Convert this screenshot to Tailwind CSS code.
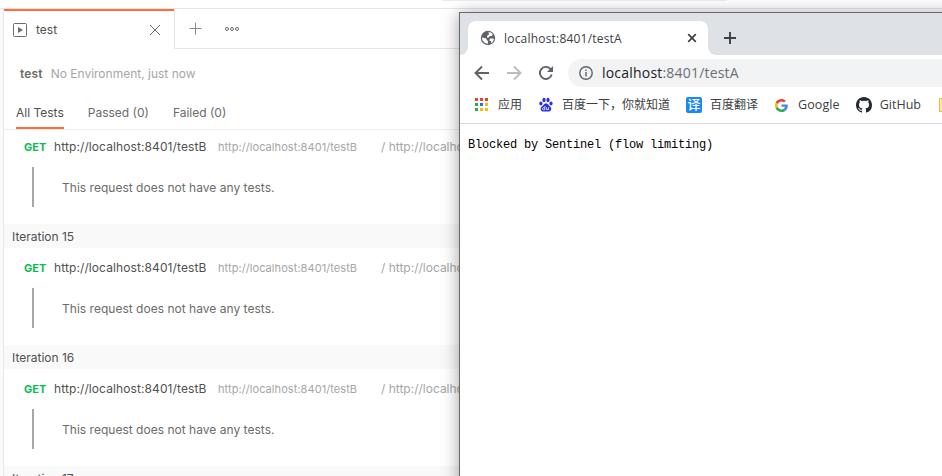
<!DOCTYPE html>
<html lang="zh">
<head>
<meta charset="utf-8">
<title>Runner</title>
<script src="https://cdn.jsdelivr.net/npm/@tailwindcss/browser@4"></script>
</head>
<body class="bg-white">
<div class="relative w-[942px] h-[476px] overflow-hidden bg-white font-['Inter',sans-serif] text-[12px] text-[#505050] whitespace-nowrap">
  <div class="h-[9px] border-b border-[#e6e6e6] pl-[442px]"><div class="h-px w-[285px] bg-[#ededed]"></div></div>
  <div class="flex h-[467px]">
    <div class="w-[4px] shrink-0 bg-[#fafafa] border-r border-[#e8e8e8]"></div>
    <main class="flex-1 flex flex-col min-w-0">
      <div class="flex h-[40px] shrink-0">
        <div class="flex items-center w-[170px] border-t-2 border-[#ff6c37] pl-[9px] pr-[13px]">
          <svg class="w-[14px] h-[14px]" viewBox="0 0 14 14"><rect x=".5" y=".5" width="13" height="13" rx="1" fill="none" stroke="#6b6b6b"/><path d="M5 4l5 3-5 3z" fill="#6b6b6b"/></svg>
          <span class="ml-[9px]">test</span>
          <svg class="ml-auto w-[12px] h-[12px]" viewBox="0 0 12 12"><path d="M1 1l10 10M11 1L1 11" stroke="#6b6b6b"/></svg>
        </div>
        <div class="flex-1 flex items-center border-l border-b border-[#e6e6e6] pl-[14px]">
          <svg class="w-[13px] h-[13px]" viewBox="0 0 13 13"><path d="M6.500 .5v12M.5 6.500h12" stroke="#8a8a8a"/></svg>
          <svg class="ml-[23px] w-[14px] h-[6px]" viewBox="0 0 14 6" fill="none" stroke="#6b6b6b"><circle cx="2" cy="3" r="1.500"/><circle cx="7" cy="3" r="1.500"/><circle cx="12" cy="3" r="1.500"/></svg>
        </div>
      </div>
      <div class="flex items-center h-[50px] shrink-0 pl-[16px] gap-[8px]"><b class="font-semibold text-[#6b6b6b] tracking-[0.15px]">test</b><span class="text-[#a6a6a6]">No Environment, just now</span></div>
      <div class="flex h-[31px] shrink-0 pl-[12px] gap-[24px] border-b border-[#ededed] text-[#6b6b6b] leading-[28px]">
        <span class="h-[30px] border-b-2 border-[#ff6c37] text-[#505050]">All Tests</span><span>Passed (0)</span><span>Failed (0)</span>
      </div>
      <section class="h-[94px] shrink-0">
        <div class="flex h-[34px] items-center pl-[20px]"><b class="w-[30px] text-[11px] font-bold text-[#0cbb52]">GET</b><span class="w-[164px] tracking-[0.1px]">http://localhost:8401/testB</span><span class="w-[163px] text-[11px] text-[#a6a6a6] tracking-[0.07px]">http://localhost:8401/testB</span><span class="text-[#a6a6a6]">/ http://localhost:8401/testB</span></div>
        <div class="mt-[3px] ml-[28px] h-[40px] border-l-2 border-[#a6a6a6] pl-[28px] leading-[42px] text-[#6b6b6b] tracking-[0.02px]">This request does not have any tests.</div>
      </section>
      <div class="h-[24px] shrink-0 bg-[#f9f9f9] pl-[8px] leading-[25px]">Iteration 15</div>
      <section class="h-[97px] shrink-0">
        <div class="flex h-[40px] items-center pl-[20px]"><b class="w-[30px] text-[11px] font-bold text-[#0cbb52]">GET</b><span class="w-[164px] tracking-[0.1px]">http://localhost:8401/testB</span><span class="w-[163px] text-[11px] text-[#a6a6a6] tracking-[0.07px]">http://localhost:8401/testB</span><span class="text-[#a6a6a6]">/ http://localhost:8401/testB</span></div>
        <div class="ml-[28px] h-[40px] border-l-2 border-[#a6a6a6] pl-[28px] leading-[42px] text-[#6b6b6b] tracking-[0.02px]">This request does not have any tests.</div>
      </section>
      <div class="h-[24px] shrink-0 bg-[#f9f9f9] pl-[8px] leading-[25px]">Iteration 16</div>
      <section class="h-[97px] shrink-0">
        <div class="flex h-[40px] items-center pl-[20px]"><b class="w-[30px] text-[11px] font-bold text-[#0cbb52]">GET</b><span class="w-[164px] tracking-[0.1px]">http://localhost:8401/testB</span><span class="w-[163px] text-[11px] text-[#a6a6a6] tracking-[0.07px]">http://localhost:8401/testB</span><span class="text-[#a6a6a6]">/ http://localhost:8401/testB</span></div>
        <div class="ml-[28px] h-[40px] border-l-2 border-[#a6a6a6] pl-[28px] leading-[42px] text-[#6b6b6b] tracking-[0.02px]">This request does not have any tests.</div>
      </section>
      <div class="h-[24px] shrink-0 bg-[#f9f9f9] pl-[8px] leading-[25px]">Iteration 17</div>
    </main>
  </div>

  <div class="absolute left-[459px] top-[12px] w-[600px] h-[600px] border border-[#68686b] bg-white shadow-[0_2px_16px_rgba(0,0,0,0.38)] font-['Open_Sans','Noto_Sans_CJK_SC',sans-serif] text-[#3c4043]">
    <div class="flex h-[42px] bg-[#dee1e6]">
      <div class="w-[8px] bg-white"><div class="h-full bg-[#dee1e6] rounded-br-[8px]"></div></div>
      <div class="mt-[8px] w-[240px] rounded-t-[8px] bg-white flex items-center pl-[12px] pr-[11px]">
        <svg class="w-[16px] h-[16px]" viewBox="0 0 16 16"><circle cx="8" cy="8" r="7.200" fill="#5f6368"/><path d="M2 7.500l4.500 1v1.500l1.500 1v2.800C4.500 13.500 2 11 2 7.500zM8.500 2c1.500 0 3.200.9 4.200 2.300L12 6h-2L8.500 7.500H7V6l2-1.500zM10 8.500h2.500l1.500.5c-.4 2-1.500 3.300-3 4.100V11H9.500z" fill="#fff"/></svg>
        <span class="ml-[8px] text-[12px] leading-[16px] tracking-[0.2px] pt-[1px]">localhost:8401/testA</span>
        <svg class="ml-auto w-[10px] h-[10px]" viewBox="0 0 10 10"><path d="M1.200 1.200l7.600 7.600M8.800 1.200L1.200 8.800" stroke="#3c4043" stroke-width="1.700"/></svg>
      </div>
      <div class="flex-1 bg-white"><div class="flex items-center h-full bg-[#dee1e6] rounded-bl-[8px] pl-[16px] pt-[8px]">
        <svg class="w-[12px] h-[12px]" viewBox="0 0 12 12"><path d="M6 0v12M0 6h12" stroke="#3c4043" stroke-width="1.900"/></svg></div></div>
    </div>
    <div class="flex items-center h-[32px] pt-[4px] pl-[14px]">
      <svg class="w-[16px] h-[16px]" viewBox="0 0 16 16" fill="none" stroke="#5f6368" stroke-width="1.900"><path d="M15 8H2M8 1.500L1.500 8 8 14.500"/></svg>
      <svg class="ml-[16px] w-[16px] h-[16px]" viewBox="0 0 16 16" fill="none" stroke="#babcbe" stroke-width="1.900"><path d="M1 8h13M8 1.500L14.500 8 8 14.500"/></svg>
      <svg class="ml-[16px] w-[16px] h-[16px]" viewBox="0 0 16 16"><path d="M13.700 9.500A6 6 0 1 1 12.300 3.800L14 5.500" fill="none" stroke="#5f6368" stroke-width="1.900"/><path d="M15 1v6H9z" fill="#5f6368"/></svg>
      <div class="ml-[14px] flex-1 h-[28px] rounded-l-[14px] bg-[#f1f3f4] flex items-center pl-[11px]">
        <svg class="w-[14px] h-[14px]" viewBox="0 0 14 14" fill="none" stroke="#5f6368" stroke-width="1.400"><circle cx="7" cy="7" r="6.200"/><path d="M7 6v4.500M7 3.400v1.500"/></svg>
        <span class="ml-[9px] text-[14px] leading-[20px] text-[#202124] tracking-[0.2px]">localhost<span class="text-[#6b6f74]">:8401/testA</span></span>
      </div>
    </div>
    <div class="flex items-center h-[37px] border-b border-[#d8dade] pl-[15px] text-[12px]">
      <svg class="w-[14px] h-[14px]" viewBox="0 0 14 14"><path fill="#ea4335" d="M0 0h3v3H0zM5 0h3v3H5zM10 0h3v3h-3z"/><path fill="#34a853" d="M0 5h3v3H0zM0 10h3v3H0z"/><path fill="#1a73e8" d="M5 5h3v3H5z"/><path fill="#fbbc05" d="M10 5h3v3h-3zM5 10h3v3H5zM10 10h3v3h-3z"/></svg>
      <span class="ml-[9px]">应用</span>
      <svg class="ml-[16px] w-[16px] h-[16px]" viewBox="0 0 16 16" fill="#2932e1"><ellipse cx="2.900" cy="6.500" rx="1.600" ry="2.100"/><ellipse cx="6" cy="3" rx="1.600" ry="2.200"/><ellipse cx="10" cy="3" rx="1.600" ry="2.200"/><ellipse cx="13" cy="6.500" rx="1.600" ry="2.100"/><path d="M8 6.200c2 0 2.600 2.300 4.200 3.400 2 1.600 1 4.800-1 4.800H4.800c-2.200 0-3-3.200-1-4.800C5.400 8.500 6 6.200 8 6.200z"/><path d="M6.800 9v3.700H5.300c-1.200 0-1.200-2 0-2h1.500M8.600 10.300v2.300h2v-2.300" fill="none" stroke="#fff" stroke-width=".8"/></svg>
      <span class="ml-[8px]">百度一下，你就知道</span>
      <span class="ml-[16px] w-[16px] h-[16px] rounded-[2px] bg-[#1b86f5] text-white text-[13px] leading-[15px] text-center font-medium">译</span>
      <span class="ml-[8px]">百度翻译</span>
      <svg class="ml-[17px] w-[13px] h-[13px]" viewBox="0 0 48 48"><path fill="#ea4335" d="M24 9.500c3.540 0 6.710 1.220 9.210 3.600l6.850-6.850C35.900 2.380 30.470 0 24 0 14.620 0 6.510 5.380 2.560 13.220l7.980 6.190C12.430 13.720 17.740 9.500 24 9.500z"/><path fill="#4285f4" d="M46.980 24.550c0-1.570-.15-3.090-.38-4.550H24v9.020h12.940c-.58 2.960-2.260 5.480-4.780 7.180l7.730 6c4.510-4.180 7.090-10.360 7.090-17.650z"/><path fill="#fbbc05" d="M10.530 28.590a14.500 14.500 0 0 1 0-9.180l-7.980-6.190a24 24 0 0 0 0 21.560z"/><path fill="#34a853" d="M24 48c6.480 0 11.930-2.130 15.890-5.810l-7.730-6c-2.150 1.450-4.920 2.300-8.160 2.300-6.260 0-11.570-4.220-13.470-9.910l-7.980 6.190C6.510 42.620 14.620 48 24 48z"/></svg>
      <span class="ml-[10px] text-[12.500px] tracking-[0.1px]">Google</span>
      <svg class="ml-[16px] w-[16px] h-[16px]" viewBox="0 0 16 16" fill="#24292e"><path d="M8 0C3.580 0 0 3.580 0 8c0 3.540 2.290 6.530 5.470 7.590.4.070.55-.17.55-.38 0-.19-.01-.82-.01-1.490-2.010.37-2.530-.49-2.690-.94-.09-.23-.48-.94-.82-1.130-.28-.15-.68-.52-.01-.53.63-.01 1.080.58 1.230.82.72 1.210 1.870.87 2.330.66.07-.52.28-.87.51-1.070-1.780-.2-3.640-.89-3.640-3.950 0-.87.31-1.590.82-2.150-.08-.2-.36-1.020.08-2.120 0 0 .67-.21 2.200.82.64-.18 1.320-.27 2-.27s1.360.09 2 .27c1.530-1.040 2.200-.82 2.200-.82.44 1.100.16 1.920.08 2.120.51.56.82 1.270.82 2.150 0 3.070-1.870 3.750-3.650 3.950.29.25.54.73.54 1.480 0 1.070-.01 1.930-.01 2.200 0 .21.15.46.55.38A8.010 8.010 0 0 0 16 8c0-4.420-3.580-8-8-8z"/></svg>
      <span class="ml-[8px] text-[12.500px]">GitHub</span>
      <span class="ml-[18px] w-[14px] h-[14px] bg-[#ffe69b] border border-[#e3c04d]"></span>
    </div>
    <div class="pl-[8px] pt-[12px] font-['Liberation_Mono',monospace] text-[12px] leading-[18px] text-black tracking-[-0.2px]">Blocked by Sentinel (flow limiting)</div>
  </div>
</div>
</body>
</html>
